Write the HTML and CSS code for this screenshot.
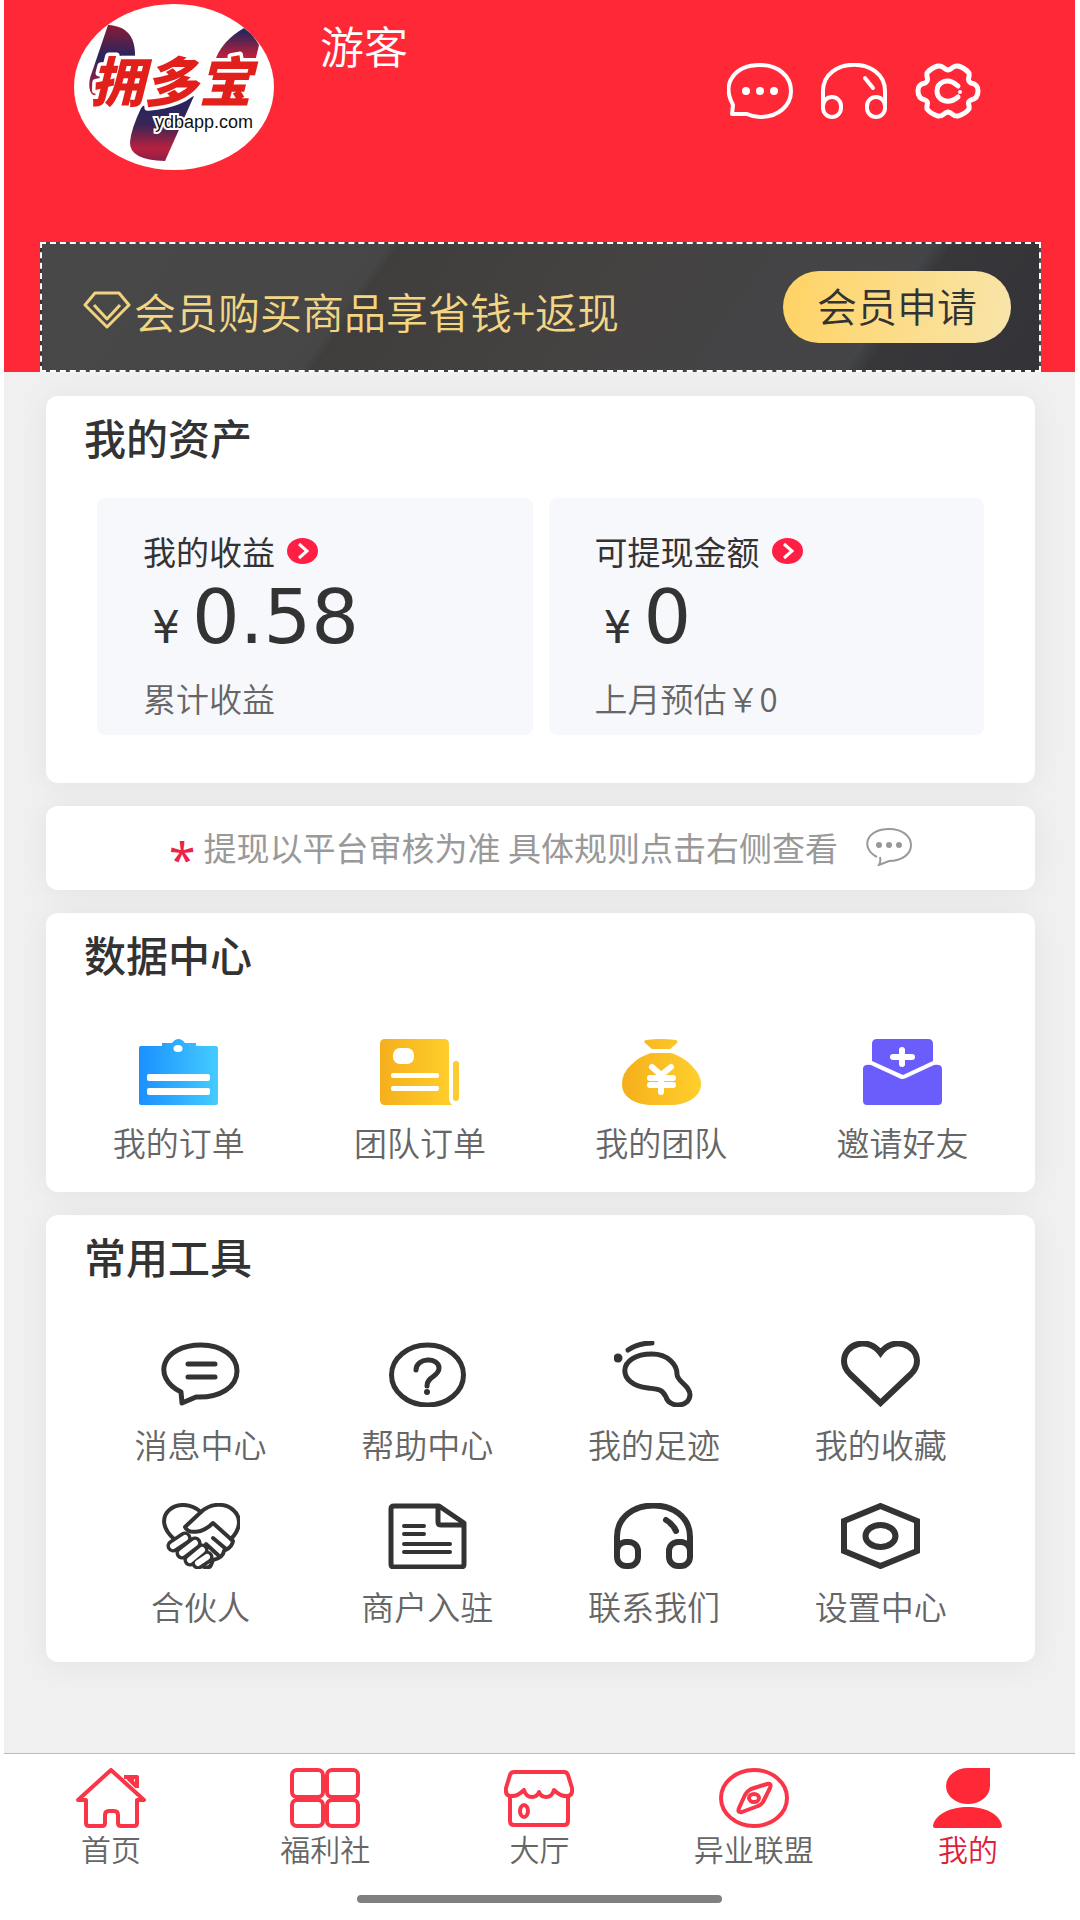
FILE: index.html
```html
<!DOCTYPE html>
<html lang="zh-CN">
<head>
<meta charset="utf-8">
<meta name="viewport" content="width=device-width, initial-scale=1">
<title>我的</title>
<link rel="stylesheet" href="styles.css">
</head>
<body>
<div class="app">
  <header class="header">
    <div class="profile">
      <svg class="avatar" viewBox="0 0 200 167" role="img" aria-label="拥多宝">
        <defs>
          <linearGradient id="arm" x1="0" y1="0" x2="0" y2="1"><stop offset="0" stop-color="#8a1a38"/><stop offset=".45" stop-color="#26265c"/><stop offset="1" stop-color="#c81f38"/></linearGradient>
          <linearGradient id="arm2" x1="0" y1="0" x2="0" y2="1"><stop offset=".1" stop-color="#2a265c"/><stop offset=".8" stop-color="#c81f38"/></linearGradient>
          <linearGradient id="stem" x1="0" y1="0" x2="0" y2="1"><stop offset=".2" stop-color="#2a265c"/><stop offset=".45" stop-color="#3a2555"/><stop offset=".8" stop-color="#b82040"/><stop offset="1" stop-color="#8a2048"/></linearGradient>
        </defs>
        <ellipse cx="100" cy="83" rx="100" ry="83" fill="#fff"/>
        <path d="M34 21C54 22 62 34 61 55L56 75L22 92Q13 90 16 74Z" fill="url(#arm)"/>
        <path d="M140 60C144 44 156 32 170 24Q180 31 185 41L180 62Z" fill="url(#arm2)"/>
        <path d="M68 102L120 92L91 157Q55 156 56 138Q57 125 68 102Z" fill="url(#stem)"/>
        <text class="logo-name" x="16" y="98">拥多宝</text>
        <text class="logo-site" x="81" y="124">ydbapp.com</text>
      </svg>
      <h1 class="name">游客</h1>
      <nav class="quick" aria-label="快捷入口">
        <a href="#" aria-label="消息"><svg viewBox="0 0 66 56" class="line white"><path d="M5 51L6 42C-6 20 8 2 33 2C51 2 64 13 64 28C64 43 51 54 33 54C28 54 24 53 20 51Z"/><g class="dots"><circle cx="19" cy="28" r="4"/><circle cx="33" cy="28" r="4"/><circle cx="47" cy="28" r="4"/></g></svg></a>
        <a href="#" aria-label="客服"><svg viewBox="0 0 66 56" class="line white"><path d="M2 44V28C2-7 64-7 64 28V44"/><rect x="2" y="34" width="18" height="20" rx="9"/><rect x="46" y="34" width="18" height="20" rx="9"/><path d="M44 15L52 25"/></svg></a>
        <a href="#" aria-label="设置"><svg viewBox="0 0 66 56" class="line white thick"><path d="M33 7C38 6 38 2 43 3Q50 5 54 10C55 15 51 17 56 20C61 21 63 23 63 28C63 33 61 36 56 37C51 39 55 41 54 46Q50 51 43 53C38 54 38 50 33 49C28 50 28 54 23 53Q16 51 12 46C11 41 15 39 10 37C5 36 3 33 3 28C3 23 5 21 10 20C15 17 11 15 12 10Q16 5 23 3C28 2 28 6 33 7Z"/><path d="M43 23C32 13 22 20 22 28S32 43 43 34"/><g class="dots"><circle cx="45" cy="29" r="2"/></g></svg></a>
      </nav>
    </div>
    <section class="banner">
      <svg class="gem" viewBox="0 0 48 38"><path d="M12 2H36L46 14L24 36L2 14Z"/><path d="M11 14L24 28L37 14"/></svg>
      <p class="banner-text">会员购买商品享省钱+返现</p>
      <button class="apply" type="button">会员申请</button>
    </section>
  </header>

  <main class="main">
    <section class="card assets">
      <h2>我的资产</h2>
      <div class="boxes">
        <article class="box">
          <a class="box-link" href="#">我的收益 <svg class="go" viewBox="0 0 31 26"><ellipse cx="15.5" cy="13" rx="15.5" ry="13"/><path d="M12 6L20 13L12 20"/></svg></a>
          <p class="amount"><span class="yen">¥</span>0.58</p>
          <p class="sub">累计收益</p>
        </article>
        <article class="box">
          <a class="box-link" href="#">可提现金额 <svg class="go" viewBox="0 0 31 26"><ellipse cx="15.5" cy="13" rx="15.5" ry="13"/><path d="M12 6L20 13L12 20"/></svg></a>
          <p class="amount"><span class="yen">¥</span>0</p>
          <p class="sub">上月预估￥0</p>
        </article>
      </div>
    </section>

    <section class="card notice">
      <span class="star">*</span>
      <p>提现以平台审核为准 具体规则点击右侧查看</p>
      <a href="#" aria-label="查看规则"><svg class="rules" viewBox="0 0 46 38"><path d="M11 29C-6 20 0 1 23 1C36 1 45 8 45 17C45 26 36 33 23 33L13 37Q15 34 14 29"/><g class="dots"><circle cx="13" cy="17" r="3"/><circle cx="23" cy="17" r="3"/><circle cx="33" cy="17" r="3"/></g></svg></a>
    </section>

    <section class="card data">
      <h2>数据中心</h2>
      <nav class="grid" aria-label="数据中心">
        <a href="#"><svg class="icon" viewBox="0 0 79 66"><defs><linearGradient id="blue"><stop stop-color="#1a90ff"/><stop offset="1" stop-color="#45ccff"/></linearGradient></defs><path fill="url(#blue)" d="M2 7H23V4H33Q36 0 39.500 0T46 4H57V7H77Q79 7 79 9V64Q79 66 77 66H2Q0 66 0 64V9Q0 7 2 7Z"/><ellipse cx="39" cy="9.500" rx="4.500" ry="3.500" fill="#fff"/><rect x="8" y="35" width="63" height="7" rx="2" fill="#fff"/><rect x="8" y="49" width="63" height="7" rx="2" fill="#fff"/></svg><span>我的订单</span></a>
        <a href="#"><svg class="icon" viewBox="0 0 79 66"><defs><linearGradient id="gold"><stop stop-color="#f5af1c"/><stop offset="1" stop-color="#ffcf2c"/></linearGradient></defs><path fill="url(#gold)" d="M5 0H64Q69 0 69 5V59Q69 63 72 66H5Q0 66 0 61V5Q0 0 5 0Z"/><rect x="73" y="22" width="6" height="40" rx="3" fill="#fbcb30"/><rect x="13" y="9" width="21" height="16" rx="7" fill="#fff"/><rect x="11" y="34" width="48" height="5" rx="2" fill="#fff"/><rect x="11" y="47" width="48" height="5" rx="2" fill="#fff"/></svg><span>团队订单</span></a>
        <a href="#"><svg class="icon" viewBox="0 0 79 66"><path fill="url(#gold)" d="M24 1Q39-1 54 1Q57 2 54 5L48 10H30L23 4Q21 2 24 1ZM29 14H49Q62 18 70 27Q79 36 79 45C79 59 63 66 49 66H31C14 66 0 59 0 45Q0 34 9 26Q18 17 29 14Z"/><path d="M30 28L39 36L49 28M28 39H51M28 46H51M39 37V53" fill="none" stroke="#fff" stroke-width="6" stroke-linecap="round"/></svg><span>我的团队</span></a>
        <a href="#"><svg class="icon" viewBox="0 0 79 66" fill="#6b5cfc"><path d="M14 0H65Q70 0 70 5V22L40 36L9 22V5Q9 0 14 0Z"/><path d="M8 26L36 39Q39 41 43 39L71 26Q79 25 79 30V62Q79 66 75 66H4Q0 66 0 62V30Q0 25 8 26Z"/><path d="M39 11V25M30 18H49" stroke="#fff" stroke-width="6" stroke-linecap="round"/></svg><span>邀请好友</span></a>
      </nav>
    </section>

    <section class="card tools">
      <h2>常用工具</h2>
      <nav class="grid" aria-label="常用工具">
        <a href="#"><svg class="icon line" viewBox="0 0 79 66"><path d="M20 51C-10 36 1 4 40 4C61 4 76 15 76 30C76 46 59 57 35 56L21 62Z"/><path d="M27 23H54M27 36H54"/></svg><span>消息中心</span></a>
        <a href="#"><svg class="icon line" viewBox="0 0 79 66"><ellipse cx="39.500" cy="34" rx="36" ry="30"/><path d="M28 29C28 16 51 16 51 27C51 36 39 35 39 45"/><circle class="dots" cx="39" cy="51" r="3"/></svg><span>帮助中心</span></a>
        <a href="#"><svg class="icon line" viewBox="0 0 79 66"><path d="M14 9Q24 2 38 2"/><circle class="dots" cx="4" cy="17" r="4.500"/><path d="M38 13C54 13 63 24 63 33C63 41 76 44 76 54C75 67 55 67 52 56C48 47 41 48 34 47C2 44 3 13 38 13Z"/></svg><span>我的足迹</span></a>
        <a href="#"><svg class="icon line bold" viewBox="0 0 79 66"><path d="M39.500 12C27-5 3 3 3 20Q3 27 9 33L39.500 62L70 33Q76 27 76 20C76 3 52-5 39.500 12Z"/></svg><span>我的收藏</span></a>
        <a href="#"><svg class="icon line shake" viewBox="0 0 79 66"><path d="M13 36C-13 13 18-10 40 9C61-10 93 12 70 36"/><path d="M40 9L24 24C27 31 41 31 52 20L72 38C71 45 66 46 63 48C62 54 57 56 52 57L50 62C48 66 43 64 41 63"/><path class="finger" d="M24 35L12 43M34 40L21 50M41 47L29 57M46 54L37 60"/><path class="gap" d="M24 35L12 43M34 40L21 50M41 47L29 57M46 54L37 60"/><path d="M45 41L57 52M52 35L65 46"/></svg><span>合伙人</span></a>
        <a href="#"><svg class="icon line" viewBox="0 0 79 66"><path d="M6 3H51L76 20V61Q76 64 73 64H6Q3 64 3 61V6Q3 3 6 3ZM50 4V19Q50 22 53 22H75"/><path d="M16 23H36M16 31H36M16 41H62M16 49H62" stroke-width="4"/></svg><span>商户入驻</span></a>
        <a href="#"><svg class="icon line bold" viewBox="0 0 79 66"><path d="M3 52V34C3-8 76-8 76 34V52"/><rect x="3" y="39" width="21" height="24" rx="9"/><rect x="55" y="39" width="21" height="24" rx="9"/><path d="M52 17Q59 21 62 28"/></svg><span>联系我们</span></a>
        <a href="#"><svg class="icon line bold" viewBox="0 0 79 66"><path d="M39.500 3L76 18V48L39.500 63L3 48V18Z"/><ellipse cx="39.500" cy="33" rx="15" ry="11"/></svg><span>设置中心</span></a>
      </nav>
    </section>
  </main>

  <footer class="footer">
    <nav class="tabs" aria-label="主导航">
      <a href="#"><svg viewBox="0 0 70 60"><path d="M35 2L68 32H61V55Q61 58 58 58H45Q42 58 42 55V47Q42 43 38 43H33Q29 43 29 47V55Q29 58 26 58H13Q10 58 10 55V32H2ZM48 9H61V20M52 10L60 18M56 10V15"/></svg><span>首页</span></a>
      <a href="#"><svg viewBox="0 0 70 60"><rect x="2" y="2" width="31" height="27" rx="5"/><rect x="37" y="2" width="31" height="27" rx="5"/><rect x="2" y="32" width="31" height="26" rx="5"/><rect x="37" y="32" width="31" height="26" rx="5"/></svg><span>福利社</span></a>
      <a href="#"><svg viewBox="0 0 70 60"><path d="M10 4H60Q63 4 64 7L68 20Q69 27 64 28Q57 29 50 22Q48 29 42 29Q37 29 35 24Q33 29 28 29Q22 29 20 22Q13 29 6 28Q1 27 2 20L6 7Q7 4 10 4ZM6 29V53Q6 57 10 57H60Q64 57 64 53V29"/><ellipse cx="20" cy="43" rx="4" ry="6"/></svg><span>大厅</span></a>
      <a href="#"><svg viewBox="0 0 70 60"><ellipse cx="35" cy="30" rx="33" ry="28"/><path d="M48 16Q53 15 51 20L44 34Q42 37 39 38L23 44Q18 45 20 40L26 27Q28 23 32 21Z"/><ellipse cx="35" cy="30" rx="5" ry="4"/></svg><span>异业联盟</span></a>
      <a href="#" class="active" aria-current="page"><svg viewBox="0 0 70 60"><path d="M35 0H57V18A22 18 0 1 1 35 0ZM0 58C2 46 18 39 35 39S67 46 69 58Q69 60 66 60H3Q0 60 0 58Z"/></svg><span>我的</span></a>
    </nav>
    <div class="handle"></div>
  </footer>
</div>
</body>
</html>
```
FILE: styles.css
```css
* { box-sizing: border-box; }

body {
  margin: 0;
  background: #fff;
  color: #333;
  font-family: "Noto Sans CJK SC", sans-serif;
}

h1, h2, p { margin: 0; }
a { color: inherit; text-decoration: none; }
svg { display: block; flex: none; }

.app {
  display: flex;
  flex-direction: column;
  min-height: 100vh;
  margin: 0 5px 0 4px;
  background: #f0f0f0;
}

/* header */
.header {
  padding: 4px 34px 0 36px;
  background: #ff2837;
}

.profile {
  display: flex;
  align-items: flex-start;
  gap: 46px;
  padding: 0 60px 71px 34px;
}

.avatar { width: 200px; height: 167px; }

.logo-name {
  font-size: 54px;
  font-weight: 900;
  font-style: italic;
  fill: #e1201c;
  stroke: #fff;
  stroke-width: 7px;
  stroke-linejoin: round;
  paint-order: stroke;
}

.logo-site {
  font-family: "Liberation Sans", sans-serif;
  font-size: 18px;
  fill: #111;
  stroke: #fff;
  stroke-width: 4px;
  paint-order: stroke;
}

.name {
  padding-top: 17px;
  color: #fff;
  font-size: 44px;
  font-weight: 350;
  line-height: 48px;
}

.quick {
  display: flex;
  gap: 28px;
  margin-left: auto;
  padding-top: 59px;
}

.quick svg { width: 66px; height: 56px; }

.line {
  fill: none;
  stroke: #333;
  stroke-width: 5;
  stroke-linecap: round;
  stroke-linejoin: round;
}

.line.bold { stroke-width: 6; stroke-linejoin: miter; }
.line.white { stroke: #fff; stroke-width: 4; }
.line.thick { stroke-width: 5; }
.line .dots { fill: #333; stroke: none; }
.line.white .dots { fill: #fff; }

.shake { stroke-width: 4; }
.shake .finger { stroke-width: 13; }
.shake .gap { stroke: #fff; stroke-width: 6; }

.banner {
  display: flex;
  align-items: center;
  padding: 27px 28px 27px 41px;
  border: 2px dashed #fff;
  background: linear-gradient(125deg, #484848 0%, #464646 32%, #403e3d 33%, #454242 55%, #444548 82%, #37373a 84%, #333237 100%);
}

.gem {
  width: 48px;
  height: 44px;
  padding-top: 6px;
  box-sizing: border-box;
  fill: none;
  stroke: #f1d27f;
  stroke-width: 3;
  stroke-linejoin: round;
}

.banner-text {
  padding: 8px 0 0 3px;
  color: #f3d684;
  font-size: 42px;
  font-weight: 350;
  line-height: 48px;
}

.apply {
  margin-left: auto;
  padding: 0 34px 4px;
  border: 0;
  border-radius: 36px;
  background: linear-gradient(100deg, #ffd364, #f8e5ab);
  color: #333;
  font-family: inherit;
  font-size: 40px;
  font-weight: 350;
  line-height: 68px;
}

/* cards */
.main {
  display: flex;
  flex-direction: column;
  gap: 23px;
  padding: 24px 40px 24px 42px;
}

.card {
  border-radius: 12px;
  background: #fff;
  box-shadow: 0 2px 30px rgba(0, 0, 0, .06);
}

.card h2 {
  padding: 17px 38px 2px;
  font-size: 42px;
  font-weight: 500;
  line-height: 48px;
}

.boxes {
  display: grid;
  grid-template-columns: 1fr 1fr;
  gap: 16px;
  padding: 35px 51px 48px;
}

.box {
  padding: 33px 46px 17px;
  border-radius: 8px;
  background: #f7f8fc;
}

.box-link {
  display: flex;
  align-items: center;
  gap: 12px;
  font-size: 33px;
  line-height: 40px;
}

.go {
  width: 31px;
  height: 26px;
  fill: #ff1f45;
}

.go path {
  fill: none;
  stroke: #fff;
  stroke-width: 3;
}

.amount {
  display: flex;
  align-items: baseline;
  gap: 12px;
  padding: 10px 0 25px 9px;
  font-family: "DejaVu Sans", sans-serif;
  font-size: 75px;
  line-height: 72px;
}

.yen {
  font-size: 44px;
  line-height: 44px;
}

.sub {
  color: #666;
  font-size: 33px;
  font-weight: 350;
  line-height: 40px;
}

.notice {
  display: flex;
  align-items: center;
  justify-content: center;
  gap: 8px;
  padding: 21px 0 23px;
  color: #999;
  font-size: 33px;
  line-height: 40px;
}

.star {
  padding-top: 24px;
  color: #ee2148;
  font-family: "Noto Sans", sans-serif;
  font-size: 48px;
  line-height: 14px;
}

.rules {
  width: 46px;
  height: 38px;
  margin-left: 20px;
  fill: none;
  stroke: #999;
  stroke-width: 2;
}

.rules .dots { fill: #999; stroke: none; }

.grid {
  display: grid;
  grid-template-columns: repeat(4, 1fr);
  row-gap: 39px;
  padding: 59px 12px 30px;
}

.tools .grid { padding: 59px 41px 36px; }

.grid a {
  display: flex;
  flex-direction: column;
  align-items: center;
  gap: 17px;
  color: #666;
  font-size: 33px;
  font-weight: 350;
  line-height: 40px;
}

.icon { width: 79px; height: 66px; }

/* bottom navigation */
.footer {
  margin-top: auto;
  padding: 14px 0 17px;
  border-top: 1px solid #bbb;
  background: #fff;
}

.tabs {
  display: grid;
  grid-template-columns: repeat(5, 1fr);
}

.tabs a {
  display: flex;
  flex-direction: column;
  align-items: center;
  gap: 2px;
  color: #666;
  font-size: 30px;
  font-weight: 350;
  line-height: 36px;
}

.tabs svg {
  width: 70px;
  height: 60px;
  fill: none;
  stroke: #fa3548;
  stroke-width: 4;
  stroke-linejoin: round;
}

.tabs .active { color: #e0203a; }
.tabs .active svg { fill: #ff2837; stroke: none; }

.handle {
  width: 34%;
  height: 8px;
  margin: 29px auto 0;
  border-radius: 4px;
  background: #808080;
}
```
